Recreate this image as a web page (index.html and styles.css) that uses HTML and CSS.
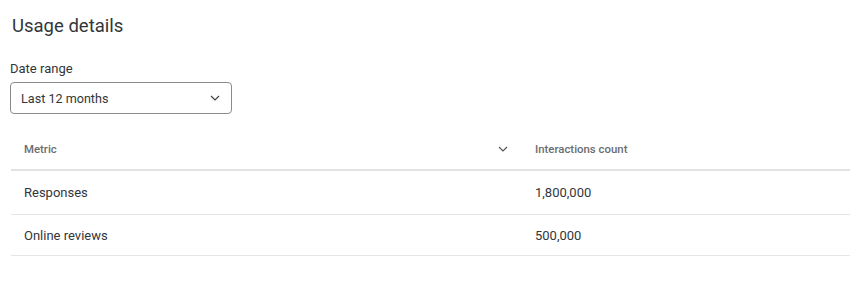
FILE: index.html
```html
<!DOCTYPE html>
<html>
<head>
<meta charset="utf-8">
<link rel="stylesheet" href="styles.css">
</head>
<body>
<div class="page">
  <h1 class="title">Usage details</h1>
  <div class="field">
    <div class="label">Date range</div>
    <div class="select">
      <span>Last 12 months</span>
      <svg class="chev" width="12" height="8" viewBox="0 0 12 8"><path d="M2 2 L6 6 L10 2" fill="none" stroke="#404040" stroke-width="1.2"/></svg>
    </div>
  </div>
  <div class="table">
    <div class="row head">
      <div class="cell c1"><span>Metric</span><svg class="chev" width="12" height="8" viewBox="0 0 12 8"><path d="M2 2 L6 6 L10 2" fill="none" stroke="#555" stroke-width="1.2"/></svg></div>
      <div class="cell c2">Interactions count</div>
    </div>
    <div class="row r1">
      <div class="cell c1">Responses</div>
      <div class="cell c2">1,800,000</div>
    </div>
    <div class="row r2">
      <div class="cell c1">Online reviews</div>
      <div class="cell c2">500,000</div>
    </div>
  </div>
</div>
</body>
</html>
```
FILE: styles.css
```css
html, body { margin: 0; padding: 0; background: #fff; }
body { font-family: "Roboto", "Noto Sans", sans-serif; color: #32363a; }
.page { padding: 11px 0 0 10px; }
.title { margin: 0 0 0 2px; font-size: 18.5px; font-weight: 400; line-height: 30px; color: #32363a; }
.field { margin-top: 19px; }
.label { font-size: 13px; line-height: 18px; color: #32363a; }
.select {
  margin-top: 4px;
  height: 30px;
  border: 1px solid #8c8c8c; border-radius: 4px;
  display: flex; align-items: center; justify-content: space-between;
  padding: 0 10px 0 10px; box-sizing: content-box; width: 200px;
  font-size: 12.6px; color: #32363a;
}
.table { margin-top: 15px; margin-left: 1px; }
.row { display: grid; grid-template-columns: 511px 1fr; border-bottom: 1px solid #e5e5e5; align-items: center; }
.head { height: 40px; border-bottom: 2px solid #e2e2e2; }
.r1 { height: 43px; }
.r2 { height: 40px; }
.cell { padding-left: 13px; font-size: 13px; }
.head .cell { font-size: 11.4px; font-weight: 500; color: #6a6d70; }
.c1 { display: flex; align-items: center; justify-content: space-between; padding-right: 13px; }
```
